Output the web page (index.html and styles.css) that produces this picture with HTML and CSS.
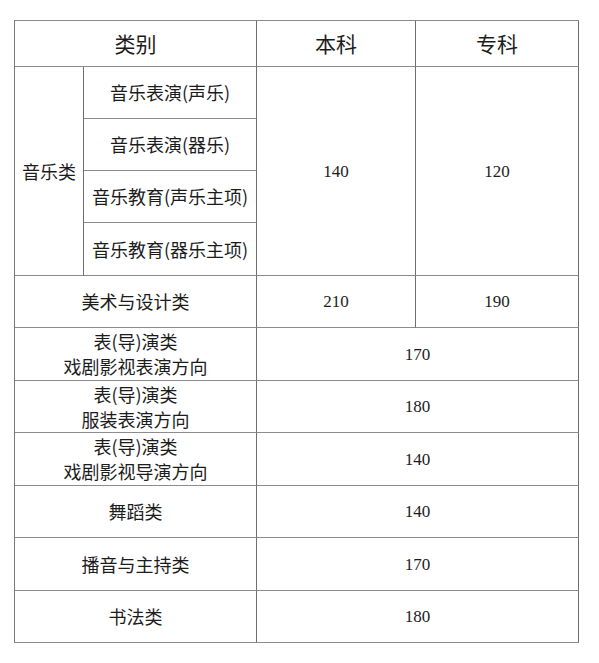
FILE: index.html
```html
<!DOCTYPE html>
<html lang="zh-CN">
<head>
<meta charset="utf-8">
<title>分数线</title>
<link rel="stylesheet" href="styles.css">
</head>
<body>
<table class="score-table">
  <colgroup>
    <col class="c1"><col class="c2"><col class="c3"><col class="c4">
  </colgroup>
  <thead>
    <tr class="h46">
      <th colspan="2">类别</th>
      <th>本科</th>
      <th>专科</th>
    </tr>
  </thead>
  <tbody>
    <tr class="h52">
      <td rowspan="4">音乐类</td>
      <td>音乐表演(声乐)</td>
      <td rowspan="4" class="num">140</td>
      <td rowspan="4" class="num">120</td>
    </tr>
    <tr class="h52"><td>音乐表演(器乐)</td></tr>
    <tr class="h52"><td>音乐教育(声乐主项)</td></tr>
    <tr class="h53"><td>音乐教育(器乐主项)</td></tr>
    <tr class="h52">
      <td colspan="2">美术与设计类</td>
      <td class="num">210</td>
      <td class="num">190</td>
    </tr>
    <tr class="h53">
      <td colspan="2" class="two">表(导)演类<br>戏剧影视表演方向</td>
      <td colspan="2" class="num">170</td>
    </tr>
    <tr class="h52">
      <td colspan="2" class="two">表(导)演类<br>服装表演方向</td>
      <td colspan="2" class="num">180</td>
    </tr>
    <tr class="h53">
      <td colspan="2" class="two">表(导)演类<br>戏剧影视导演方向</td>
      <td colspan="2" class="num">140</td>
    </tr>
    <tr class="h52">
      <td colspan="2">舞蹈类</td>
      <td colspan="2" class="num">140</td>
    </tr>
    <tr class="h53">
      <td colspan="2">播音与主持类</td>
      <td colspan="2" class="num">170</td>
    </tr>
    <tr class="h52">
      <td colspan="2">书法类</td>
      <td colspan="2" class="num">180</td>
    </tr>
  </tbody>
</table>
</body>
</html>
```
FILE: styles.css
```css
html, body {
  margin: 0;
  padding: 0;
  background: #ffffff;
}

body {
  padding: 20px 0 0 14px;
  font-family: "Noto Sans CJK SC", "Noto Sans", sans-serif;
  color: #1c1c1c;
}

.score-table {
  table-layout: fixed;
  border-collapse: separate;
  border-spacing: 0;
  width: 565px;
  border-left: 1px solid #7a7a7a;
  border-top: 1px solid #8c8c8c;
}

.c1 { width: 69px; }
.c2 { width: 173px; }
.c3 { width: 159px; }
.c4 { width: 163px; }

.score-table th,
.score-table td {
  padding: 0;
  text-align: center;
  vertical-align: middle;
  border-right: 1px solid #6e6e6e;
  border-bottom: 1px solid #8c8c8c;
  font-size: 18px;
  font-weight: normal;
  line-height: 25px;
}

.score-table th {
  font-size: 21px;
}

.score-table .num {
  font-family: "Liberation Serif", "Times New Roman", serif;
  font-size: 17px;
}

.h46 { height: 46px; }
.h52 { height: 52px; }
.h53 { height: 53px; }
```
